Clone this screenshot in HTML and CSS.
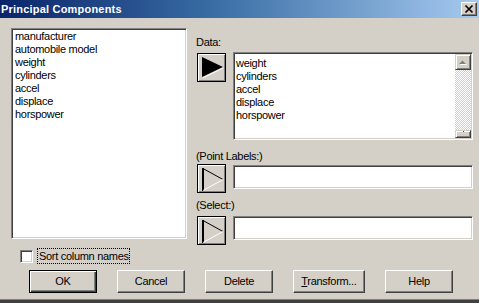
FILE: index.html
```
<!DOCTYPE html>
<html>
<head>
<meta charset="utf-8">
<link rel="stylesheet" href="styles.css">
</head>
<body>
<div class="window">
  <div class="titlebar">
    <span class="title">Principal Components</span>
    <span class="close-btn">
      <svg width="14" height="12" viewBox="0 0 14 12"><path d="M3.5 2.5 L10.5 9.5 M10.5 2.5 L3.5 9.5" stroke="#000" stroke-width="1.7" fill="none"/></svg>
    </span>
  </div>
  <div class="main">
    <div class="sunken varlist">
      <div class="item">manufacturer</div>
      <div class="item">automobile model</div>
      <div class="item">weight</div>
      <div class="item">cylinders</div>
      <div class="item">accel</div>
      <div class="item">displace</div>
      <div class="item">horspower</div>
    </div>
    <div class="right">
      <div class="label lbl-data">Data:</div>
      <div class="row row-data">
        <div class="arrow-btn">
          <svg width="27" height="27" viewBox="0 0 27 27"><polygon points="4,3 25,13 4,23" fill="#000"/><path d="M5 24 L25 14" stroke="#fff" stroke-width="1" fill="none"/></svg>
        </div>
        <div class="sunken datalist">
          <div class="items">
            <div class="item">weight</div>
            <div class="item">cylinders</div>
            <div class="item">accel</div>
            <div class="item">displace</div>
            <div class="item">horspower</div>
          </div>
          <div class="scrollbar">
            <div class="sb-btn sb-up">
              <svg width="14" height="14" viewBox="0 0 14 14"><polygon points="4,10 11,10 7.5,6.5" fill="#fff"/><polygon points="3,9 10,9 6.5,5.5" fill="#808080"/></svg>
            </div>
            <div class="sb-track"></div>
            <div class="sb-btn sb-down"><span class="sb-dot"></span></div>
          </div>
        </div>
      </div>
      <div class="label lbl-point">(Point Labels:)</div>
      <div class="row">
        <div class="arrow-btn">
          <svg width="27" height="27" viewBox="0 0 27 27"><rect x="4" y="3" width="2" height="23" fill="#000"/><path d="M5 3.5 L25 14.5" stroke="#000" stroke-width="1" fill="none"/><path d="M5 25.5 L25 14.5" stroke="#fff" stroke-width="1" fill="none"/></svg>
        </div>
        <div class="sunken textbox tb-point"></div>
      </div>
      <div class="label lbl-select">(Select:)</div>
      <div class="row">
        <div class="arrow-btn">
          <svg width="27" height="27" viewBox="0 0 27 27"><rect x="4" y="3" width="2" height="23" fill="#000"/><path d="M5 3.5 L25 14.5" stroke="#000" stroke-width="1" fill="none"/><path d="M5 25.5 L25 14.5" stroke="#fff" stroke-width="1" fill="none"/></svg>
        </div>
        <div class="sunken textbox"></div>
      </div>
    </div>
  </div>
  <div class="checkrow">
    <span class="checkbox"></span>
    <span class="checklabel">Sort column names</span>
  </div>
  <div class="buttons">
    <div class="btn btn-default">OK</div>
    <div class="btn">Cancel</div>
    <div class="btn">Delete</div>
    <div class="btn btn-wide"><u>T</u>ransform...</div>
    <div class="btn">Help</div>
  </div>
  <div class="frame-bottom"></div>
</div>
</body>
</html>
```

FILE: styles.css
```
html, body {
  margin: 0;
  padding: 0;
  background: #d4d0c8;
}
.window {
  width: 479px;
  height: 303px;
  display: flex;
  flex-direction: column;
  background: #d4d0c8;
  font-family: "Liberation Sans", Arial, sans-serif;
  font-size: 11px;
  letter-spacing: -0.3px;
  color: #000;
  overflow: hidden;
}
.titlebar {
  height: 18px;
  flex: none;
  display: flex;
  align-items: flex-start;
  background: linear-gradient(to right, #0a246a 0%, #3a6ea5 45%, #a6caf0 100%);
}
.title {
  color: #fff;
  font-weight: bold;
  letter-spacing: 0.2px;
  line-height: 18px;
  padding-left: 1px;
}
.close-btn {
  margin-left: auto;
  margin-right: 2px;
  margin-top: 2px;
  width: 16px;
  height: 14px;
  box-sizing: border-box;
  background: #d4d0c8;
  border: 1px solid;
  border-color: #fff #404040 #404040 #fff;
  box-shadow: inset -1px -1px #808080;
  display: flex;
}
.close-btn svg { display: block; }

.sunken {
  box-sizing: border-box;
  background: #fff;
  border: 1px solid;
  border-color: #808080 #fff #fff #808080;
  box-shadow: inset 1px 1px #404040, inset -1px -1px #d4d0c8;
}
.item {
  line-height: 13px;
  white-space: nowrap;
}
.main {
  display: flex;
  margin-top: 10px;
  padding-left: 11px;
  align-items: flex-start;
}
.varlist {
  width: 176px;
  height: 211px;
  padding: 1px 3px;
}
.right {
  margin-left: 9px;
  display: flex;
  flex-direction: column;
}
.label {
  line-height: 13px;
}
.lbl-data { margin-top: 8px; }
.lbl-point { margin-top: 10px; }
.lbl-select { margin-top: 6px; }
.row {
  display: flex;
  align-items: flex-start;
  margin-top: 1px;
}
.row-data { margin-top: 3px; }
.lbl-select + .row { margin-top: 4px; }
.arrow-btn {
  width: 29px;
  height: 29px;
  box-sizing: border-box;
  margin-left: 1px;
  margin-right: 7px;
  border: 1px solid #000;
  background: #d4d0c8;
  box-shadow: inset 1px 1px #fff, inset -1px -1px #808080;
}
.arrow-btn svg { display: block; }
.row-data .arrow-btn { margin-top: 1px; }
.datalist {
  width: 240px;
  height: 88px;
  display: flex;
  padding: 1px;
}
.items {
  flex: 1;
  padding: 3px 1px 0;
}
.scrollbar {
  width: 16px;
  display: flex;
  flex-direction: column;
}
.sb-btn {
  box-sizing: border-box;
  background: #d4d0c8;
  border: 1px solid;
  border-color: #d4d0c8 #404040 #404040 #d4d0c8;
  box-shadow: inset 1px 1px #fff, inset -1px -1px #808080;
}
.sb-up {
  height: 16px;
}
.sb-up svg { display: block; }
.sb-track {
  flex: 1;
  background: repeating-conic-gradient(#fff 0 25%, #d4d0c8 0 50%) 0 0 / 2px 2px;
}
.sb-down {
  height: 8px;
  display: flex;
  justify-content: center;
}
.sb-dot {
  width: 1px;
  height: 1px;
  margin-top: 0;
  background: #404040;
}
.textbox {
  width: 240px;
  height: 24px;
}
.tb-point { margin-top: 1px; }

.checkrow {
  display: flex;
  align-items: center;
  margin-top: 3px;
  padding-left: 20px;
}
.checkbox {
  width: 13px;
  height: 13px;
  box-sizing: border-box;
  background: #fff;
  border: 1px solid;
  border-color: #808080 #fff #fff #808080;
  box-shadow: inset 1px 1px #404040, inset -1px -1px #d4d0c8;
  margin-right: 4px;
}
.checklabel {
  border: 1px dotted #000;
  line-height: 14px;
  padding: 0 0 0 1px;
}
.buttons {
  display: flex;
  gap: 20px;
  margin-top: 6px;
  padding-left: 29px;
}
.btn {
  width: 68px;
  height: 23px;
  box-sizing: border-box;
  border: 1px solid;
  border-color: #fff #404040 #404040 #fff;
  box-shadow: inset -1px -1px #808080;
  text-align: center;
  line-height: 20px;
  background: #d4d0c8;
}
.btn-wide { width: 72px; }
.btn-default {
  border-color: #000;
  box-shadow: inset 1px 1px #fff, inset -1px -1px #404040, inset -2px -2px #808080;
}
.frame-bottom {
  margin-top: auto;
  height: 4px;
  box-sizing: border-box;
  border-top: 1px solid #808080;
  background: #404040;
}
```
